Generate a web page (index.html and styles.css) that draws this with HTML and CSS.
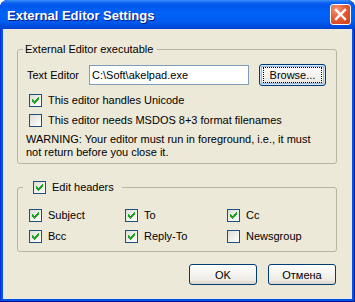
FILE: index.html
```html
<!DOCTYPE html>
<html lang="en">
  <head>
    <meta charset="UTF-8" />
    <title>External Editor Settings</title>
    <link rel="stylesheet" href="styles.css">
  </head>
  <body>
    <div class="window">
      <div class="titlebar">
        <span class="title">External Editor Settings</span>
        <span class="close">
          <svg width="19" height="19" viewBox="0 0 19 19">
            <path d="M5 5 L14 14 M14 5 L5 14" stroke="#fff" stroke-width="2.4" stroke-linecap="square" />
          </svg>
        </span>
      </div>
      <div class="client">
        <!-- executable group -->
        <fieldset class="group group-exe">
          <legend class="caption">External Editor executable</legend>
          <div class="path-row">
            <span class="path-label">Text Editor</span>
            <div class="textbox">C:\Soft\akelpad.exe</div>
            <button class="btn btn-browse"><span class="focus-ring">Browse...</span></button>
          </div>
          <div class="check-row">
            <span class="cb"><svg width="11" height="11" viewBox="0 0 11 11" shape-rendering="crispEdges"><path fill="#21A121" d="M8 2h1v1h-1zM7 3h2v1h-2zM2 4h1v1h-1zM6 4h3v1h-3zM2 5h2v1h-2zM5 5h3v1h-3zM2 6h5v1h-5zM3 7h3v1h-3zM4 8h1v1h-1z"/></svg></span>
            This editor handles Unicode
          </div>
          <div class="check-row">
            <span class="cb"></span>
            This editor needs MSDOS 8+3 format filenames
          </div>
          <p class="warning">WARNING: Your editor must run in foreground, i.e., it must<br>not return before you close it.</p>
        </fieldset>

        <!-- headers group -->
        <fieldset class="group group-headers">
          <legend class="caption caption-check">
            <span class="cb"><svg width="11" height="11" viewBox="0 0 11 11" shape-rendering="crispEdges"><path fill="#21A121" d="M8 2h1v1h-1zM7 3h2v1h-2zM2 4h1v1h-1zM6 4h3v1h-3zM2 5h2v1h-2zM5 5h3v1h-3zM2 6h5v1h-5zM3 7h3v1h-3zM4 8h1v1h-1z"/></svg></span>
            Edit headers
          </legend>
          <div class="header-grid">
            <div class="header-item"><span class="cb"><svg width="11" height="11" viewBox="0 0 11 11" shape-rendering="crispEdges"><path fill="#21A121" d="M8 2h1v1h-1zM7 3h2v1h-2zM2 4h1v1h-1zM6 4h3v1h-3zM2 5h2v1h-2zM5 5h3v1h-3zM2 6h5v1h-5zM3 7h3v1h-3zM4 8h1v1h-1z"/></svg></span>Subject</div>
            <div class="header-item"><span class="cb"><svg width="11" height="11" viewBox="0 0 11 11" shape-rendering="crispEdges"><path fill="#21A121" d="M8 2h1v1h-1zM7 3h2v1h-2zM2 4h1v1h-1zM6 4h3v1h-3zM2 5h2v1h-2zM5 5h3v1h-3zM2 6h5v1h-5zM3 7h3v1h-3zM4 8h1v1h-1z"/></svg></span>To</div>
            <div class="header-item"><span class="cb"><svg width="11" height="11" viewBox="0 0 11 11" shape-rendering="crispEdges"><path fill="#21A121" d="M8 2h1v1h-1zM7 3h2v1h-2zM2 4h1v1h-1zM6 4h3v1h-3zM2 5h2v1h-2zM5 5h3v1h-3zM2 6h5v1h-5zM3 7h3v1h-3zM4 8h1v1h-1z"/></svg></span>Cc</div>
            <div class="header-item"><span class="cb"><svg width="11" height="11" viewBox="0 0 11 11" shape-rendering="crispEdges"><path fill="#21A121" d="M8 2h1v1h-1zM7 3h2v1h-2zM2 4h1v1h-1zM6 4h3v1h-3zM2 5h2v1h-2zM5 5h3v1h-3zM2 6h5v1h-5zM3 7h3v1h-3zM4 8h1v1h-1z"/></svg></span>Bcc</div>
            <div class="header-item"><span class="cb"><svg width="11" height="11" viewBox="0 0 11 11" shape-rendering="crispEdges"><path fill="#21A121" d="M8 2h1v1h-1zM7 3h2v1h-2zM2 4h1v1h-1zM6 4h3v1h-3zM2 5h2v1h-2zM5 5h3v1h-3zM2 6h5v1h-5zM3 7h3v1h-3zM4 8h1v1h-1z"/></svg></span>Reply-To</div>
            <div class="header-item"><span class="cb"></span>Newsgroup</div>
          </div>
        </fieldset>

        <div class="buttons">
          <button class="btn btn-dialog">OK</button>
          <button class="btn btn-dialog">Отмена</button>
        </div>
      </div>
    </div>
  </body>
</html>
```

FILE: styles.css
```css
body {
  margin: 0;
  background: #fff;
  font-family: "Liberation Sans", Arial, sans-serif;
  font-size: 11px;
  line-height: 13px;
  color: #000;
}
.window {
  width: 355px;
  height: 302px;
  display: flex;
  flex-direction: column;
  background: #0054e6;
  border-radius: 8px 8px 0 0;
  box-shadow: inset 0 -1px 0 #00138c, inset 1px 0 0 #0831d9, inset -1px 0 0 #001ea0;
}
/* Title bar */
.titlebar {
  height: 29px;
  flex: none;
  display: flex;
  align-items: center;
  justify-content: space-between;
  padding: 0 4px 0 7px;
  border-radius: 8px 8px 0 0;
  background: linear-gradient(
    to bottom,
    #3d8ff9 0px,
    #0a5ff0 3px,
    #0058ee 6px,
    #0063f9 14px,
    #005af0 22px,
    #0049d9 27px,
    #0042cf 29px
  );
}
.title {
  color: #fff;
  font-weight: bold;
  font-size: 13px;
  text-shadow: 1px 1px 0 #0a1883;
  padding-top: 1px;
}
.close {
  width: 21px;
  height: 21px;
  box-sizing: border-box;
  border: 1px solid #fff;
  border-radius: 3px;
  background: radial-gradient(circle at 30% 25%, #f29a7c 0%, #e45a34 45%, #cc3d17 100%);
  display: flex;
}
/* Client area */
.client {
  flex: 1;
  margin: 0 3px 3px 3px;
  background: #ece9d8;
  display: flex;
  flex-direction: column;
}
.group {
  box-sizing: border-box;
  width: 320px;
  margin: 0 0 0 14px;
  padding: 0 0 4px 0;
  border: 1px solid #b7b4a4;
  border-radius: 3px;
  min-inline-size: 0;
}
.group-exe {
  margin-top: 14px;
}
.group-headers {
  margin-top: 17px;
}
.caption {
  margin-left: 5px;
  padding: 0 4px 0 2px;
  line-height: 13px;
  color: #000;
}
.caption-check {
  display: flex;
  align-items: center;
  gap: 6px;
  padding: 0 8px 0 10px;
}
.path-row {
  display: flex;
  align-items: center;
  height: 22px;
  margin-top: 8px;
  padding-left: 9px;
}
.path-label {
  width: 62px;
}
.textbox {
  box-sizing: border-box;
  width: 160px;
  height: 20px;
  border: 1px solid #7f9db9;
  background: #fff;
  padding-left: 2px;
  display: flex;
  align-items: center;
}
.btn {
  box-sizing: border-box;
  border: 1px solid #003c74;
  border-radius: 3px;
  background: linear-gradient(to bottom, #ffffff 0%, #f6f5f1 40%, #ecebe5 80%, #d8d2c6 100%);
  font-family: "Liberation Sans", Arial, sans-serif;
  font-size: 11px;
  color: #000;
  padding: 0;
  display: flex;
  align-items: center;
  justify-content: center;
}
.btn-browse {
  width: 67px;
  height: 22px;
  margin-left: 10px;
  box-shadow: inset 0 0 0 1px #cee7ff, inset 0 0 0 2px #98b8ea;
}
.focus-ring {
  box-sizing: border-box;
  width: 59px;
  height: 16px;
  border: 1px dotted #000;
  display: flex;
  align-items: center;
  justify-content: center;
}
.check-row {
  display: flex;
  align-items: center;
  gap: 6px;
  height: 20px;
  padding-left: 11px;
}
.check-row:first-of-type,
.path-row + .check-row {
  margin-top: 4px;
}
.cb {
  box-sizing: border-box;
  width: 13px;
  height: 13px;
  flex: none;
  border: 1px solid #1c5180;
  background: linear-gradient(135deg, #dcdcd7 0%, #f2f2ef 60%, #ffffff 100%);
  display: flex;
}
.warning {
  margin: 3px 0 0 8px;
  line-height: 13px;
}
.header-grid {
  display: grid;
  grid-template-columns: 96px 102px auto;
  grid-auto-rows: 21px;
  padding: 11px 0 0 11px;
}
.header-item {
  display: flex;
  align-items: center;
  gap: 6px;
}
.buttons {
  display: flex;
  justify-content: flex-end;
  gap: 11px;
  margin-top: 12px;
  padding-right: 16px;
}
.btn-dialog {
  width: 68px;
  height: 21px;
}
```
